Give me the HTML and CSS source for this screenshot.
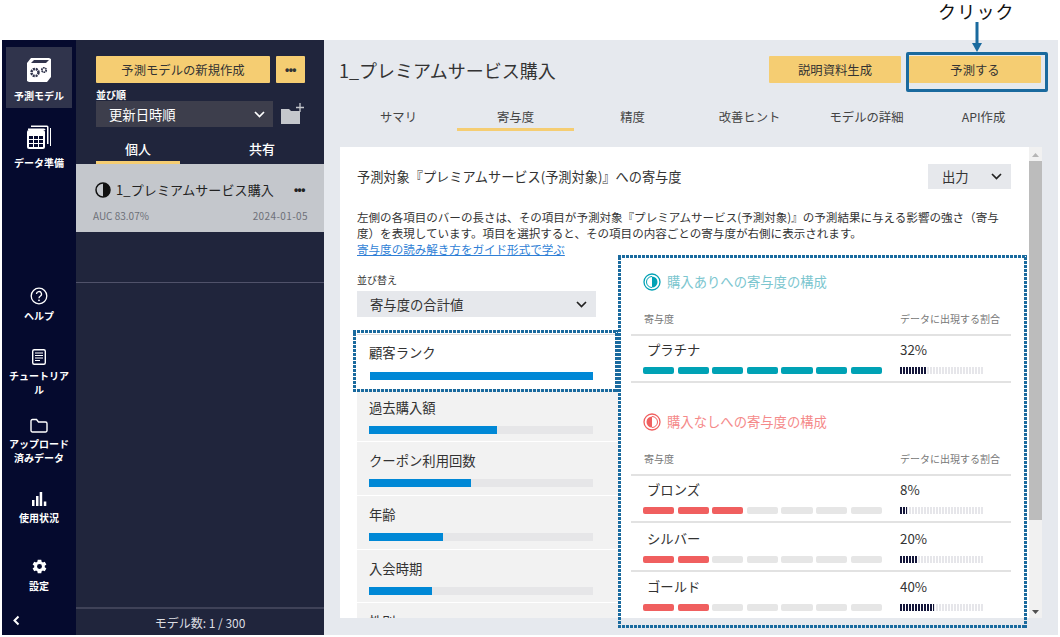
FILE: index.html
```html
<!DOCTYPE html>
<html lang="ja">
<head>
	<meta charset="UTF-8">
	<title>寄与度</title>
	<link rel="stylesheet" href="styles.css">
</head>
<body>
	<div class="app">
		<nav class="nav">
			<a class="nav-item active">
				<svg width="26" height="26" viewBox="0 0 26 26"><path d="M5 1h18l2 1v18l-4 5H3l-2-1V6z" fill="#fff"/><path d="M5 6h15l3-3H8z" fill="#30344c"/><circle cx="9" cy="15.500" r="3.500" fill="none" stroke="#30344c" stroke-width="2.500" stroke-dasharray="2 .8"/><circle cx="18" cy="13" r="2.200" fill="none" stroke="#30344c" stroke-width="1.800" stroke-dasharray="1.500 .6"/></svg>
				<span>予測モデル</span>
			</a>
			<a class="nav-item data">
				<svg width="26" height="26" viewBox="0 0 26 26"><path d="M5 3V1.500h16a1.500 1.500 0 0 1 1.500 1.500v17H21V3z M2 6V4.500h16A1.500 1.500 0 0 1 19.500 6" fill="#fff"/><path d="M25 4v18h-1V4z" fill="#fff"/><rect x="1" y="6" width="18" height="19" rx="2" fill="#fff"/><path d="M3 12h4v3H3zm5 0h4v3H8zm5 0h4v3h-4zM3 16h4v3H3zm5 0h4v3H8zm5 0h4v3h-4zM3 20h4v3H3zm5 0h4v3H8zm5 0h4v3h-4z" fill="#050a2e"/></svg>
				<span>データ準備</span>
			</a>
			<a class="nav-item help">
				<svg width="18" height="18" viewBox="0 0 18 18"><circle cx="9" cy="9" r="7.800" fill="none" stroke="#fff" stroke-width="1.300"/><path d="M6.500 7a2.500 2.500 0 1 1 3.700 2.200c-.8.500-1.200 1-1.200 2" fill="none" stroke="#fff" stroke-width="1.300"/><circle cx="9" cy="13.300" r=".9" fill="#fff"/></svg>
				<span>ヘルプ</span>
			</a>
			<a class="nav-item tutorial">
				<svg width="16" height="18" viewBox="0 0 16 18"><rect x="1.700" y="1.700" width="12.600" height="14.600" rx="1.500" fill="none" stroke="#fff" stroke-width="1.400"/><path d="M4 5h8M4 7.500h8M4 10h8M4 12.500h5" stroke="#fff" stroke-width="1.200"/></svg>
				<span>チュートリアル</span>
			</a>
			<a class="nav-item upload">
				<svg width="18" height="15" viewBox="0 0 18 15"><path d="M1 3a1.500 1.500 0 0 1 1.500-1.500h4L8.500 4h7A1.500 1.500 0 0 1 17 5.500v7a1.500 1.500 0 0 1-1.500 1.500h-13A1.500 1.500 0 0 1 1 12.500z" fill="none" stroke="#fff" stroke-width="1.400"/></svg>
				<span>アップロード<br>済みデータ</span>
			</a>
			<a class="nav-item usage">
				<svg width="16" height="16" viewBox="0 0 16 16"><path d="M1 9h2.500v6H1zM5 5h2.500v10H5zM8.700 1h2.500v14H8.700zM12.800 10.500h2.500V15h-2.500z" fill="#fff"/></svg>
				<span>使用状況</span>
			</a>
			<a class="nav-item settings">
				<svg width="17" height="17" viewBox="0 0 24 24"><path d="M19.400 13a7.500 7.500 0 0 0 0-2l2.300-1.800-2.300-4-2.700 1.100a7.500 7.500 0 0 0-1.700-1L14.500 2.500h-5L9 5.300a7.500 7.500 0 0 0-1.700 1L4.600 5.200l-2.300 4L4.600 11a7.500 7.500 0 0 0 0 2l-2.300 1.800 2.300 4 2.700-1.100a7.500 7.500 0 0 0 1.700 1l.5 2.800h5l.5-2.800a7.500 7.500 0 0 0 1.700-1l2.700 1.100 2.300-4zM12 15.500a3.500 3.500 0 1 1 0-7 3.500 3.500 0 0 1 0 7z" fill="#fff"/></svg>
				<span>設定</span>
			</a>
			<a class="nav-collapse">
				<svg width="9" height="11" viewBox="0 0 9 11"><path d="M6.500 1.500 2.500 5.500l4 4" fill="none" stroke="#fff" stroke-width="2"/></svg>
			</a>
		</nav>

		<aside class="side">
			<div class="side-top">
				<div class="side-actions">
					<button class="btn new-btn">予測モデルの新規作成</button>
					<button class="btn dots-btn">•••</button>
				</div>
				<div class="side-label">並び順</div>
				<div class="side-sort">
					<div class="side-select">
						<span>更新日時順</span>
						<svg width="11" height="7" viewBox="0 0 11 7"><path d="M1 1l4.500 4.500L10 1" fill="none" stroke="#fff" stroke-width="1.700"/></svg>
					</div>
					<svg width="25" height="22" viewBox="0 0 25 22"><path d="M1 6h8l2 2h9v13H1z" fill="#c4c7cc"/><path d="M20 0v9M16 4.500h8" stroke="#c4c7cc" stroke-width="1.300"/></svg>
				</div>
				<div class="side-tabs">
					<div class="side-tab on">個人</div>
					<div class="side-tab">共有</div>
				</div>
			</div>
			<div class="model-card">
				<div class="model-row">
					<svg width="16" height="16" viewBox="0 0 16 16"><circle cx="8" cy="8" r="7" fill="none" stroke="#111" stroke-width="1.500"/><path d="M8 1a7 7 0 0 1 0 14z" fill="#111"/></svg>
					<span class="model-name">1_プレミアムサービス購入</span>
					<span class="model-dots">•••</span>
				</div>
				<div class="model-meta"><span>AUC 83.07%</span><span class="model-date">2024-01-05</span></div>
			</div>
			<div class="side-empty"></div>
			<div class="side-foot">モデル数: 1 / 300</div>
		</aside>

		<main class="main">
			<header class="main-head">
				<h1>1_プレミアムサービス購入</h1>
				<div class="main-actions">
					<button class="btn wide-btn">説明資料生成</button>
					<button class="btn wide-btn">予測する</button>
				</div>
			</header>
			<div class="tabs">
				<a class="tab">サマリ</a>
				<a class="tab on">寄与度</a>
				<a class="tab">精度</a>
				<a class="tab">改善ヒント</a>
				<a class="tab">モデルの詳細</a>
				<a class="tab">API作成</a>
			</div>
			<div class="panel">
				<div class="panel-body">
					<div class="panel-head">
						<h2>予測対象『プレミアムサービス(予測対象)』への寄与度</h2>
						<div class="out-select">
							<span>出力</span>
							<svg width="11" height="7" viewBox="0 0 11 7"><path d="M1 1l4.500 4.500L10 1" fill="none" stroke="#222" stroke-width="1.700"/></svg>
						</div>
					</div>
					<p class="desc">左側の各項目のバーの長さは、その項目が予測対象『プレミアムサービス(予測対象)』の予測結果に与える影響の強さ（寄与度）を表現しています。項目を選択すると、その項目の内容ごとの寄与度が右側に表示されます。<br><a>寄与度の読み解き方をガイド形式で学ぶ</a></p>
					<div class="columns">
						<div class="left-col">
							<div class="sort-label">並び替え</div>
							<div class="sort-select">
								<span>寄与度の合計値</span>
								<svg width="11" height="7" viewBox="0 0 11 7"><path d="M1 1l4.500 4.500L10 1" fill="none" stroke="#222" stroke-width="1.700"/></svg>
							</div>
							<ul class="items">
								<li class="item sel"><span>顧客ランク</span><div class="track"><div class="fill" style="width:100%"></div></div></li>
								<li class="item"><span>過去購入額</span><div class="track"><div class="fill" style="width:57%"></div></div></li>
								<li class="item"><span>クーポン利用回数</span><div class="track"><div class="fill" style="width:45.500%"></div></div></li>
								<li class="item"><span>年齢</span><div class="track"><div class="fill" style="width:33.200%"></div></div></li>
								<li class="item"><span>入会時期</span><div class="track"><div class="fill" style="width:28%"></div></div></li>
								<li class="item"><span>性別</span><div class="track"><div class="fill" style="width:20%"></div></div></li>
							</ul>
						</div>
						<div class="right-col">
							<h3 class="comp-title teal">
								<svg width="18" height="18" viewBox="0 0 18 18"><circle cx="9" cy="9" r="8" fill="none" stroke="#00a2b5" stroke-width="1.300"/><path d="M9 3.500a5.500 5.500 0 0 1 0 11z" fill="#00a2b5"/><path d="M9 3.500a5.500 5.500 0 0 0 0 11" fill="none" stroke="#00a2b5"/></svg>
								<span>購入ありへの寄与度の構成</span>
							</h3>
							<div class="comp-head"><span>寄与度</span><span>データに出現する割合</span></div>
							<div class="comp-row">
								<div class="comp-main">
									<div class="comp-name">プラチナ</div>
									<div class="segs teal-segs"><i class="on"></i><i class="on"></i><i class="on"></i><i class="on"></i><i class="on"></i><i class="on"></i><i class="on"></i></div>
								</div>
								<div class="comp-share">
									<div class="comp-pct">32%</div>
									<div class="ticks"><div class="ticks-fill" style="width:32%"></div></div>
								</div>
							</div>
							<h3 class="comp-title red second">
								<svg width="18" height="18" viewBox="0 0 18 18"><circle cx="9" cy="9" r="8" fill="none" stroke="#f05f5f" stroke-width="1.300"/><path d="M9 3.500a5.500 5.500 0 0 0 0 11z" fill="#f05f5f"/><path d="M9 3.500a5.500 5.500 0 0 1 0 11" fill="none" stroke="#f05f5f"/></svg>
								<span>購入なしへの寄与度の構成</span>
							</h3>
							<div class="comp-head"><span>寄与度</span><span>データに出現する割合</span></div>
							<div class="comp-row">
								<div class="comp-main">
									<div class="comp-name">ブロンズ</div>
									<div class="segs red-segs"><i class="on"></i><i class="on"></i><i class="on"></i><i></i><i></i><i></i><i></i></div>
								</div>
								<div class="comp-share">
									<div class="comp-pct">8%</div>
									<div class="ticks"><div class="ticks-fill" style="width:8%"></div></div>
								</div>
							</div>
							<div class="comp-row">
								<div class="comp-main">
									<div class="comp-name">シルバー</div>
									<div class="segs red-segs"><i class="on"></i><i class="on"></i><i></i><i></i><i></i><i></i><i></i></div>
								</div>
								<div class="comp-share">
									<div class="comp-pct">20%</div>
									<div class="ticks"><div class="ticks-fill" style="width:20%"></div></div>
								</div>
							</div>
							<div class="comp-row">
								<div class="comp-main">
									<div class="comp-name">ゴールド</div>
									<div class="segs red-segs"><i class="on"></i><i class="on"></i><i></i><i></i><i></i><i></i><i></i></div>
								</div>
								<div class="comp-share">
									<div class="comp-pct">40%</div>
									<div class="ticks"><div class="ticks-fill" style="width:40%"></div></div>
								</div>
							</div>
						</div>
					</div>
				</div>
				<div class="scrollbar">
					<svg width="7" height="4" viewBox="0 0 7 4"><path d="M3.500 0 7 4H0z" fill="#b5b5b5"/></svg>
					<div class="thumb"></div>
					<svg width="7" height="4" viewBox="0 0 7 4"><path d="M3.500 4 7 0H0z" fill="#505050"/></svg>
				</div>
			</div>
		</main>
	</div>

	<!-- 説明用の注釈 -->
	<div class="note-text">クリック</div>
	<svg class="note-arrow" width="10" height="30" viewBox="0 0 10 30"><path d="M5 0v22" stroke="#1a6a9e" stroke-width="3"/><path d="M0 21h10l-5 9z" fill="#1a6a9e"/></svg>
	<div class="note-box"></div>
	<div class="note-dots item-dots"></div>
	<div class="note-dots comp-dots"></div>
</body>
</html>
```

FILE: styles.css
```css
*{box-sizing: border-box; margin: 0; padding: 0;}
html,body{height: 100%;}
body{
	background: #fff;
	padding: 40px 2px 2px 2px;
	font-family: "Noto Sans CJK JP", "Noto Sans", sans-serif;
	color: #333;
	overflow: hidden;
}
button{font-family: inherit; border: 0;}
ul{list-style: none;}
i{display: block;}
.app{display: flex; height: 595px;}

/* ナビ */
.nav{
	width: 74px;
	background: #050a2e;
	display: flex;
	flex-direction: column;
	align-items: center;
	flex-shrink: 0;
	padding-top: 7px;
	color: #fff;
}
.nav-item{
	width: 66px;
	display: flex;
	flex-direction: column;
	align-items: center;
	font-size: 10px;
	line-height: 14px;
	font-weight: 700;
	text-align: center;
}
.nav-item.active{background: #30344c; height: 61px; padding-top: 10px;}
.nav-item.active span{margin-top: 6px;}
.nav-item.data{margin-top: 8px; padding-top: 8px;}
.nav-item.data span{margin-top: 6px;}
.nav-item.help{margin-top: 117px;}
.nav-item.help span{margin-top: 4px;}
.nav-item.tutorial{margin-top: 25px;}
.nav-item.tutorial span{margin-top: 3px; width: 62px;}
.nav-item.upload{margin-top: 21px;}
.nav-item.upload span{margin-top: 4px;}
.nav-item.usage{margin-top: 26px;}
.nav-item.usage span{margin-top: 4px;}
.nav-item.settings{margin-top: 33px;}
.nav-item.settings span{margin-top: 4px;}
.nav-collapse{align-self: flex-start; margin: 14px 0 0 10px;}

/* サイド */
.side{
	width: 248px;
	background: #20253c;
	display: flex;
	flex-direction: column;
	flex-shrink: 0;
	color: #fff;
}
.side-top{padding: 16px 19px 0 20px;}
.side-actions{display: flex; gap: 6px;}
.btn{
	background: #f5cd72;
	color: #333;
	border-radius: 1px;
	height: 27px;
	font-size: 12.330px;
}
.new-btn{width: 174px;}
.dots-btn{width: 29px; font-family: "Liberation Sans", sans-serif; font-size: 12px; font-weight: 700; letter-spacing: -.5px;}
.side-label{font-size: 10px; font-weight: 700; line-height: 12px; margin-top: 6px;}
.side-sort{display: flex; align-items: center; justify-content: space-between;}
.side-select{
	width: 177px;
	height: 26px;
	background: #3d3e4c;
	display: flex;
	align-items: center;
	justify-content: space-between;
	padding: 0 8px 0 13px;
	font-size: 13.330px;
}
.side-tabs{display: flex; margin-top: 10px;}
.side-tab{
	width: 84px;
	height: 27px;
	font-size: 13px;
	font-weight: 500;
	line-height: 24px;
	text-align: center;
}
.side-tab:last-child{margin-left: 40px;}
.side-tab.on{border-bottom: 3px solid #f5cd72;}
.model-card{
	height: 68px;
	background: #c4c7cc;
	color: #222;
	padding: 16px 9px 0 18px;
}
.model-row{display: flex; align-items: center; gap: 5px; font-size: 13px; line-height: 20px;}
.model-row svg{margin-left: 1px;}
.model-name{flex: 1; white-space: nowrap; letter-spacing: .1px;}
.model-dots{font-family: "Liberation Sans", sans-serif; font-size: 12px; margin-right: 10px; font-weight: 700; letter-spacing: -.5px;}
.model-meta{
	display: flex;
	justify-content: space-between;
	margin: 9px 7px 0 -1px;
	font-size: 10px;
	line-height: 14px;
	color: #6d7078;
	white-space: nowrap;
}
.model-date{letter-spacing: .4px;}
.side-empty{
	flex: 1;
	background: linear-gradient(#20253c 50px, #50526a 50px, #50526a 51px, #20253c 51px);
}
.side-foot{
	height: 28px;
	border-top: 2px solid #3f4258;
	font-size: 12px;
	line-height: 28px;
	text-align: center;
	color: #dcdde2;
}

/* メイン */
.main{
	flex: 1;
	min-width: 0;
	background: #e6e9ee;
	padding: 16px 16px 17px 16px;
	display: flex;
	flex-direction: column;
}
.main-head{display: flex; justify-content: space-between;}
.main-head h1{font-size: 18px; font-weight: 400; line-height: 28px; white-space: nowrap; margin-left: -1px;}
.main-actions{display: flex; gap: 8px; margin-right: 1px;}
.wide-btn{width: 132px;}
.tabs{display: flex; margin-top: 24px;}
.tab{
	width: 117px;
	height: 23px;
	font-size: 12.330px;
	line-height: 18px;
	text-align: center;
	color: #444;
}
.tab.on{border-bottom: 3px solid #f5cd72;}
.panel{
	flex: 1;
	min-height: 0;
	margin-top: 16px;
	background: #fff;
	display: flex;
	overflow: hidden;
}
.panel-body{flex: 1; min-width: 0; padding: 17px 18px 0 17px;}
.panel-head{display: flex; justify-content: space-between; align-items: center;}
.panel-head h2{font-size: 13.200px; font-weight: 400; line-height: 25px;}
.out-select{
	width: 83px;
	height: 25px;
	background: #e6e8ec;
	display: flex;
	align-items: center;
	justify-content: space-between;
	padding: 0 9px 0 14px;
	font-size: 13.330px;
}
.desc{margin-top: 20px; font-size: 11.550px; line-height: 16px; width: 654px;}
.desc a{color: #2f7fd6; text-decoration: underline;}
.columns{display: flex; margin-top: 15px;}
.left-col{width: 261px; flex-shrink: 0;}
.sort-label{font-size: 10px; line-height: 14px; margin-top: 1px;}
.sort-select{
	width: 239px;
	height: 26px;
	margin-top: 4px;
	background: #e6e8ec;
	display: flex;
	align-items: center;
	justify-content: space-between;
	padding: 1px 9px 0 13px;
	font-size: 13.330px;
}
.items{margin-top: 17px;}
.item{
	height: 53.700px;
	background: #f2f2f2;
	border-bottom: 1px solid #fff;
	padding: 9px 25px 0 12px;
	font-size: 13.330px;
	line-height: 20px;
}
.item.sel{height: 54.700px; padding-top: 8px; background: #fff; border-top: 1px solid #ddd;}
.track{height: 8px; margin-top: 8px; background: #e6e6e8;}
.item.sel .track{margin-left: 1px; margin-top: 9px;}
.fill{height: 100%; background: #0088d6;}
.right-col{flex: 1; min-width: 0; margin-left: 13px;}
.comp-title{
	display: flex;
	align-items: center;
	gap: 6px;
	padding-left: 12px;
	font-size: 13.330px;
	font-weight: 400;
	line-height: 20px;
}
.comp-title.teal{color: #7cc6cf;}
.comp-title.red{color: #f58a8a;}
.comp-title.second{margin-top: 29px;}
.comp-head{
	display: flex;
	justify-content: space-between;
	margin-top: 20px;
	height: 24px;
	border-bottom: 2px solid #e2e2e2;
	padding: 0 11px 0 13px;
	font-size: 10px;
	line-height: 14px;
	color: #777;
}
.comp-row{
	display: flex;
	height: 47px;
	border-bottom: 2px solid #e2e2e2;
	padding: 4px 0 0 12px;
}
.comp-row + .comp-row{height: 48.700px; padding-top: 5.500px;}
.comp-main{width: 240px;}
.comp-name{padding-left: 4px; font-size: 13.330px; line-height: 20px; color: #333;}
.segs{display: flex; gap: 3.300px; margin-top: 7px;}
.segs i{width: 31.300px; height: 7px; border-radius: 2px; background: #e6e6e6;}
.teal-segs i.on{background: #00a2b5;}
.red-segs i.on{background: #f05f5f;}
.comp-share{margin-left: 17px; width: 84px;}
.comp-pct{font-size: 13.330px; line-height: 20px;}
.ticks{
	height: 7px;
	margin-top: 7px;
	background: repeating-linear-gradient(90deg, #e6e6ea 0, #e6e6ea 2px, #fff 2px, #fff 3px);
}
.ticks-fill{
	height: 100%;
	background: repeating-linear-gradient(90deg, #14163a 0, #14163a 2px, #fff 2px, #fff 3px);
}
.scrollbar{
	width: 13px;
	background: #f1f1f1;
	display: flex;
	flex-direction: column;
	align-items: center;
	flex-shrink: 0;
	padding: 6px 0 4px 0;
}
.thumb{width: 100%; flex: 0 0 359px; margin-top: 4px; background: #bcbcbc;}
.scrollbar svg:last-child{margin-top: auto;}

/* 注釈 */
.note-text{
	position: absolute;
	left: 938px;
	top: 0;
	font-size: 18px;
	line-height: 22px;
	letter-spacing: 1.200px;
	color: #111;
}
.note-arrow{position: absolute; left: 972px; top: 22px;}
.note-box{
	position: absolute;
	left: 906px;
	top: 52px;
	width: 142px;
	height: 40px;
	border: 3px solid #1a6a9e;
	border-radius: 2px;
}
.note-dots{
	position: absolute;
	background:
		repeating-linear-gradient(90deg, #1a6a9e 0, #1a6a9e 3px, transparent 3px, transparent 4px) top / 100% 3px no-repeat,
		repeating-linear-gradient(90deg, #1a6a9e 0, #1a6a9e 3px, transparent 3px, transparent 4px) bottom / 100% 3px no-repeat,
		repeating-linear-gradient(0deg, #1a6a9e 0, #1a6a9e 3px, transparent 3px, transparent 4px) left / 3px 100% no-repeat,
		repeating-linear-gradient(0deg, #1a6a9e 0, #1a6a9e 3px, transparent 3px, transparent 4px) right / 3px 100% no-repeat;
}
.item-dots{left: 353px; top: 330px; width: 265px; height: 62px;}
.comp-dots{left: 618px; top: 255px; width: 409px; height: 373px;}
```
